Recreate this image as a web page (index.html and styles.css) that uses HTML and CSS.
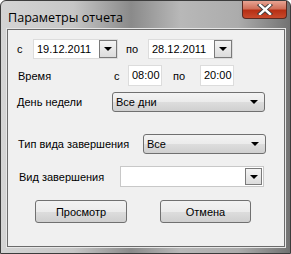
FILE: index.html
```html
<!DOCTYPE html>
<html lang="ru">
<head>
    <meta charset="UTF-8">
    <title>Параметры отчета</title>
    <link rel="stylesheet" href="styles.css">
</head>
<body>
    <div class="window">
        <div class="titlebar">
            <span class="title">Параметры отчета</span>
            <span class="close">
                <svg width="16" height="11" viewBox="0 0 16 11">
                    <path d="M3 1 L13 10 M13 1 L3 10" stroke="#3a3a3a" stroke-width="4.2" stroke-linecap="square"/>
                    <path d="M3 1 L13 10 M13 1 L3 10" stroke="#ffffff" stroke-width="2.4" stroke-linecap="square"/>
                </svg>
            </span>
        </div>
        <div class="client">
            <div class="row row-dates">
                <span class="lbl lbl-from">с</span>
                <div class="datebox">
                    <span class="val">19.12.2011</span>
                    <span class="dropbtn"><i class="tri"></i></span>
                </div>
                <span class="lbl lbl-to">по</span>
                <div class="datebox">
                    <span class="val">28.12.2011</span>
                    <span class="dropbtn"><i class="tri"></i></span>
                </div>
            </div>
            <div class="row row-time">
                <span class="lbl lbl-time">Время</span>
                <span class="lbl lbl-tfrom">с</span>
                <div class="timebox">08:00</div>
                <span class="lbl lbl-tto">по</span>
                <div class="timebox">20:00</div>
            </div>
            <div class="row row-day">
                <span class="lbl lbl-day">День недели</span>
                <div class="combo combo-day">
                    <span class="val">Все дни</span>
                    <i class="tri"></i>
                </div>
            </div>
            <div class="row row-type">
                <span class="lbl lbl-type">Тип вида завершения</span>
                <div class="combo combo-type">
                    <span class="val">Все</span>
                    <i class="tri"></i>
                </div>
            </div>
            <div class="row row-kind">
                <span class="lbl lbl-kind">Вид завершения</span>
                <div class="editcombo">
                    <span class="val"></span>
                    <span class="dropbtn"><i class="tri"></i></span>
                </div>
            </div>
            <div class="row row-buttons">
                <button class="btn btn-view">Просмотр</button>
                <button class="btn btn-cancel">Отмена</button>
            </div>
        </div>
    </div>
</body>
</html>
```

FILE: styles.css
```css
body {
    margin: 0;
    padding: 0;
    background-color: #fff;
    font-family: "Liberation Sans", Arial, sans-serif;
    font-size: 11px;
    color: #000;
}
.window {
    width: 291px;
    height: 254px;
    box-sizing: border-box;
    border: 1px solid #3c3c3c;
    border-radius: 6px 6px 0 0;
    background: linear-gradient(90deg, #d4d4d4 0%, #c6c6c6 25%, #8a8a8a 45%, #b8b8b8 62%, #acacac 82%, #727272 100%);
    display: flex;
    flex-direction: column;
}
.titlebar {
    height: 28px;
    display: flex;
    align-items: flex-start;
    justify-content: space-between;
}
.title {
    font-family: "Open Sans", "Noto Sans", sans-serif;
    font-size: 12.6px;
    margin: 8px 0 0 7px;
    color: #000;
}
.close {
    width: 45px;
    height: 18px;
    margin-right: 3px;
    box-sizing: border-box;
    border: 1px solid #5a2a22;
    border-top: none;
    border-radius: 0 0 4px 4px;
    background: linear-gradient(180deg, #e8a493 0%, #d0705a 45%, #b72f14 55%, #c84a2c 100%);
    display: flex;
    align-items: center;
    justify-content: center;
}
.client {
    flex: 1;
    margin: 0 5px 6px 6px;
    background-color: #f0f0f0;
    border: 1px solid #6b6b6b;
    box-shadow: 0 0 0 1px #e6e6e6;
}
.row {
    display: flex;
    align-items: center;
    padding-left: 9px;
}
.lbl {
    display: inline-block;
}
.row-dates {
    margin-top: 9px;
    height: 20px;
}
.lbl-from {
    width: 16px;
}
.lbl-to {
    margin-left: 8px;
    width: 22px;
}
.datebox {
    width: 85px;
    height: 20px;
    box-sizing: border-box;
    background-color: #fff;
    border: 1px solid #dcdcdc;
    display: flex;
    align-items: center;
    justify-content: space-between;
    padding-left: 3px;
}
.val {
    white-space: nowrap;
}
.dropbtn {
    width: 18px;
    height: 18px;
    box-sizing: border-box;
    border: 1px solid #7a7a7a;
    background: linear-gradient(180deg, #f4f4f4, #dcdcdc);
    display: flex;
    align-items: center;
    justify-content: center;
}
.tri {
    width: 0;
    height: 0;
    border-left: 4px solid transparent;
    border-right: 4px solid transparent;
    border-top: 4px solid #000;
}
.row-time {
    margin-top: 6px;
    height: 21px;
}
.lbl-time {
    width: 96px;
    padding-left: 1px;
}
.lbl-tfrom {
    width: 14px;
}
.lbl-tto {
    margin-left: 11px;
    width: 27px;
}
.timebox {
    width: 34px;
    height: 21px;
    box-sizing: border-box;
    background-color: #fff;
    border: 1px solid #dcdcdc;
    padding-left: 3px;
    line-height: 19px;
}
.row-day {
    margin-top: 6px;
    height: 20px;
}
.lbl-day {
    width: 95px;
}
.combo {
    height: 20px;
    box-sizing: border-box;
    border: 1px solid #707070;
    border-radius: 3px;
    background: linear-gradient(180deg, #f3f3f3 0%, #ebebeb 50%, #dddddd 51%, #d0d0d0 100%);
    display: flex;
    align-items: center;
    justify-content: space-between;
    padding: 0 6px 0 3px;
}
.combo-day {
    width: 153px;
}
.row-type {
    margin-top: 22px;
    height: 20px;
}
.lbl-type {
    width: 125px;
    padding-left: 1px;
}
.combo-type {
    width: 123px;
}
.row-kind {
    margin-top: 12px;
    height: 21px;
}
.lbl-kind {
    width: 101px;
    padding-left: 2px;
}
.editcombo {
    width: 144px;
    height: 21px;
    box-sizing: border-box;
    background-color: #fff;
    border: 1px solid #c8c8c8;
    display: flex;
    align-items: center;
    justify-content: space-between;
    padding-right: 1px;
}
.editcombo .dropbtn {
    width: 17px;
    height: 17px;
}
.row-buttons {
    margin-top: 13px;
    padding-left: 27px;
    gap: 33px;
}
.btn {
    height: 23px;
    box-sizing: border-box;
    border: 1px solid #707070;
    border-radius: 3px;
    background: linear-gradient(180deg, #f2f2f2 0%, #ebebeb 50%, #dddddd 51%, #cfcfcf 100%);
    font-family: "Liberation Sans", Arial, sans-serif;
    font-size: 11px;
    color: #000;
    padding: 0;
}
.btn-view {
    width: 92px;
}
.btn-cancel {
    width: 91px;
}
```
